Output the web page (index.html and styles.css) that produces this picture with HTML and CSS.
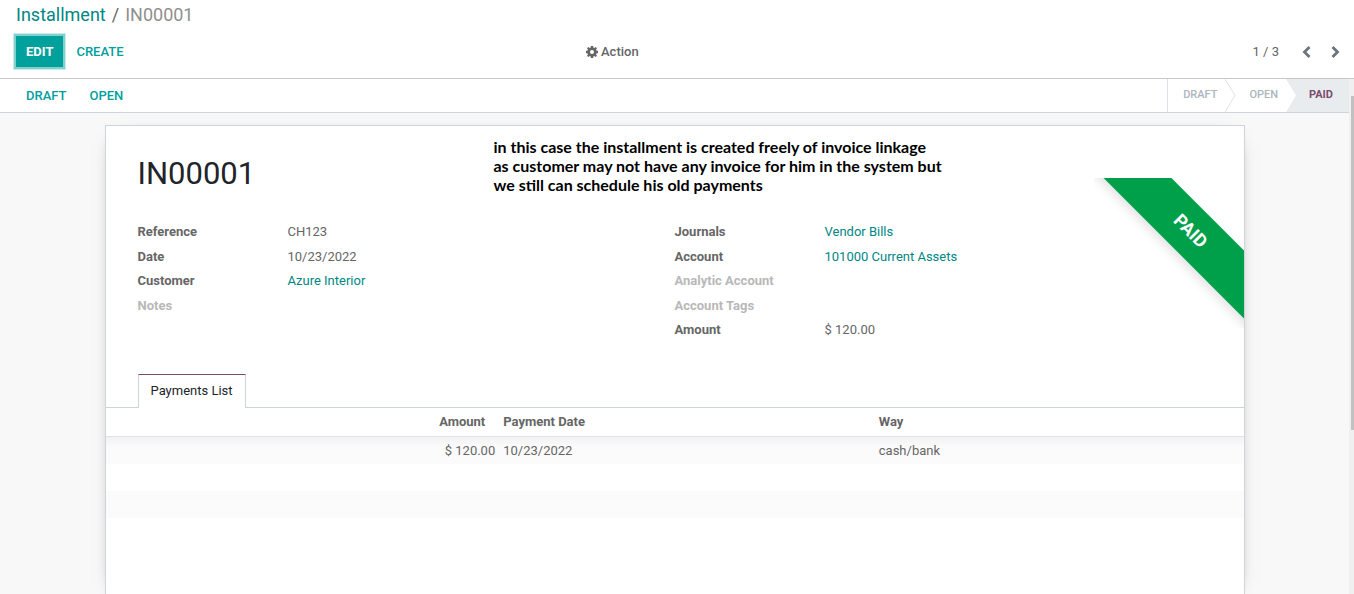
FILE: index.html
```html
<!DOCTYPE html>
<html lang="en">
<head>
<meta charset="utf-8">
<title>Installment / IN00001</title>
<link rel="stylesheet" href="styles.css">
</head>
<body>
<header class="control-panel">
  <nav class="breadcrumb" aria-label="Breadcrumb">
    <a href="#">Installment</a><span class="slash">/</span><span class="current">IN00001</span>
  </nav>
  <div class="toolbar">
    <div class="toolbar-left">
      <button class="btn btn-primary" type="button">EDIT</button>
      <button class="btn btn-link" type="button">CREATE</button>
    </div>
    <button class="action" type="button">
      <svg width="12" height="12" viewBox="0 0 12 12" aria-hidden="true"><path fill="currentColor" fill-rule="evenodd" d="M4.800 0h2.400l.3 1.700.8.300L9.700 1 11 2.300l-1 1.400.3.800 1.700.3v2.400l-1.700.3-.3.800 1 1.400L9.700 11l-1.400-1-.8.300L7.200 12H4.800l-.3-1.700-.8-.3-1.400 1L1 9.700l1-1.400-.3-.8L0 7.200V4.800l1.700-.3.300-.8-1-1.400L2.300 1l1.400 1 .8-.3zM6 4a2 2 0 1 0 0 4 2 2 0 0 0 0-4z"/></svg>
      Action
    </button>
    <div class="pager">
      <span class="pager-count">1 / 3</span>
      <button class="pager-btn" type="button" aria-label="Previous"><svg width="10" height="12" viewBox="0 0 10 12"><path d="M7.500 1 2.500 6l5 5" fill="none" stroke="currentColor" stroke-width="2.800"/></svg></button>
      <button class="pager-btn" type="button" aria-label="Next"><svg width="10" height="12" viewBox="0 0 10 12"><path d="m2.500 1 5 5-5 5" fill="none" stroke="currentColor" stroke-width="2.800"/></svg></button>
    </div>
  </div>
</header>
<div class="viewport">
  <main class="form-view">
    <div class="statusbar">
      <div class="status-actions">
        <button class="status-action" type="button">DRAFT</button>
        <button class="status-action" type="button">OPEN</button>
      </div>
      <div class="stages">
        <button class="stage" type="button">DRAFT</button>
        <svg class="chevron" width="11" height="33" viewBox="0 0 11 33" aria-hidden="true"><path d="M0 0 10 16.500 0 33" fill="none" stroke="#dee2e6"/></svg>
        <button class="stage" type="button">OPEN</button>
        <svg class="chevron chevron-active" width="11" height="33" viewBox="0 0 11 33" aria-hidden="true"><path d="M0 0 10 16.500 0 33z" fill="#fff"/></svg>
        <button class="stage stage-active" type="button" aria-current="step">PAID</button>
      </div>
    </div>
    <div class="sheet-area">
      <article class="sheet">
        <div class="ribbon"><span>PAID</span></div>
        <div class="sheet-head">
          <h1>IN00001</h1>
          <p class="note">in this case the installment is created freely of invoice linkage<br>as customer may not have any invoice for him in the system but<br>we still can schedule his old payments</p>
        </div>
        <div class="groups">
          <dl class="group">
            <dt>Reference</dt><dd>CH123</dd>
            <dt>Date</dt><dd>10/23/2022</dd>
            <dt>Customer</dt><dd><a href="#">Azure Interior</a></dd>
            <dt class="empty">Notes</dt><dd></dd>
          </dl>
          <dl class="group">
            <dt>Journals</dt><dd><a href="#">Vendor Bills</a></dd>
            <dt>Account</dt><dd><a href="#">101000 Current Assets</a></dd>
            <dt class="empty">Analytic Account</dt><dd></dd>
            <dt class="empty">Account Tags</dt><dd></dd>
            <dt>Amount</dt><dd>$ 120.00</dd>
          </dl>
        </div>
        <div class="tabs" role="tablist">
          <button class="tab" type="button" role="tab" aria-selected="true">Payments List</button>
        </div>
        <table class="payments">
          <thead>
            <tr><th class="amount">Amount</th><th class="date">Payment Date</th><th>Way</th></tr>
          </thead>
          <tbody>
            <tr><td class="amount">$ 120.00</td><td>10/23/2022</td><td>cash/bank</td></tr>
            <tr><td colspan="3"></td></tr>
            <tr><td colspan="3"></td></tr>
          </tbody>
        </table>
      </article>
    </div>
  </main>
  <div class="scrollbar" aria-hidden="true"><div class="thumb"></div></div>
</div>
</body>
</html>
```
FILE: styles.css
```css
* { box-sizing: border-box; }

body {
  margin: 0;
  height: 100vh;
  display: flex;
  flex-direction: column;
  overflow: hidden;
  background: #fff;
  color: #666;
  font-family: Roboto, "Liberation Sans", sans-serif;
  font-size: 13px;
  line-height: 1.5;
}

a { color: #008784; text-decoration: none; }

button {
  margin: 0;
  padding: 0;
  border: 0;
  background: none;
  color: inherit;
  font: inherit;
  cursor: pointer;
}

.control-panel {
  padding: 0 14px 9px;
  border-bottom: 1px solid #c8c8c8;
}

.breadcrumb {
  padding: 2px;
  font-size: 18px;
  line-height: 26px;
  color: #666;
}
.slash { padding: 0 6px; }
.current { color: #8f8f8f; }

.toolbar {
  display: grid;
  grid-template-columns: 572px 1fr auto;
  align-items: center;
  margin-top: 4px;
}
.toolbar-left { display: flex; }

.btn {
  height: 35px;
  padding: 0 12px;
  font-weight: 500;
}
.btn-primary {
  height: 31px;
  margin: 2px;
  padding: 0 10px;
  background: #00a09d;
  color: #fff;
  font-weight: 700;
  box-shadow: 0 0 0 2px #80d0ce, 0 0 0 3px #cceceb;
}
.btn-link { padding: 0 11px; color: #00a09d; }

.action {
  display: flex;
  align-items: center;
  gap: 3px;
  justify-self: start;
  color: #666;
  font-weight: 500;
}

.pager { display: flex; align-items: center; }
.pager-count { margin-right: 23px; }
.pager-btn { display: flex; color: #6c757d; }
.pager-btn + .pager-btn { margin-left: 18px; }

.viewport { flex: 1; display: flex; min-height: 0; }

.form-view {
  flex: 1;
  display: flex;
  flex-direction: column;
  min-width: 0;
  background: #f8f8f8;
}

.statusbar {
  display: flex;
  justify-content: space-between;
  height: 34px;
  background: #fff;
  border-bottom: 1px solid #ced4da;
}
.status-actions { display: flex; gap: 23px; padding-left: 26px; }
.status-action { color: #00a09d; font-weight: 500; }

.stages { display: flex; border-left: 1px solid #dee2e6; }
.stage {
  padding: 0 8px 1px 13px;
  color: #adb5bd;
  font-size: 11px;
  font-weight: 500;
}
.stage:first-child { padding-left: 15px; }
.stage-active {
  padding-right: 16px;
  padding-left: 12px;
  background: #e9ecef;
  color: #7c4b6b;
  font-weight: 700;
}
.chevron-active { background: #e9ecef; }

.sheet-area { flex: 1; display: flex; justify-content: center; padding-top: 12px; }

.sheet {
  position: relative;
  width: 100%;
  max-width: 1140px;
  background: #fff;
  border: 1px solid #ced4da;
  border-bottom: 0;
  box-shadow: 0 5px 20px -15px #000;
}

.ribbon {
  position: absolute;
  top: 52px;
  right: 0;
  width: 150px;
  height: 150px;
  overflow: hidden;
}
.ribbon span {
  position: absolute;
  top: 29px;
  left: -16px;
  width: 225px;
  line-height: 48px;
  transform: rotate(45deg);
  background: #00a04a;
  box-shadow: 0 5px 10px rgba(0, 0, 0, .1);
  color: #fff;
  font-size: 18px;
  font-weight: 700;
  text-align: center;
}

.sheet-head { display: flex; padding: 11px 32px 0; height: 96px; }
.sheet-head h1 {
  flex: 0 0 356px;
  margin: 18px 0 0;
  color: #212529;
  font-size: 31px;
  font-weight: 400;
  line-height: 38px;
}
.note {
  margin: 0;
  color: #000;
  font-family: Lato, "Open Sans", sans-serif;
  font-size: 16px;
  font-weight: 700;
  line-height: 19px;
}

.groups { display: grid; grid-template-columns: 1fr 1fr; padding: 0 32px; }
.group {
  display: grid;
  grid-template-columns: 150px 1fr;
  align-content: start;
  margin: 0;
}
.group dt, .group dd { margin: 0; padding: 0 0 5px; }
.group dt { font-weight: 700; }
.group .empty { color: #b8b8b8; }

.tabs {
  display: flex;
  margin-top: 29px;
  padding: 0 32px;
  border-bottom: 1px solid #ced4da;
}
.tab {
  height: 34px;
  margin-bottom: -1px;
  padding: 0 12px;
  background: #fff;
  border: 1px solid #ced4da;
  border-top-color: #7c4b6b;
  border-bottom: 0;
  color: #212529;
}

.payments { width: 100%; border-collapse: collapse; table-layout: fixed; }
.payments th, .payments td { padding: 0 4px; text-align: left; }
.payments th {
  height: 29px;
  border-bottom: 1px solid #dee2e6;
  font-weight: 700;
}
.payments td { height: 27px; }
.payments .date { width: 33%; }
.payments .amount { width: 34.6%; text-align: right; }
.payments th.amount { padding-right: 14px; }
.payments tbody tr:nth-child(odd) { background: #fbfbfb; }
.payments tbody tr:first-child { background: linear-gradient(#f2f2f2, #fbfbfb 10px); }

.scrollbar { width: 5px; padding: 17px 0 0 2px; background: #f0f0f0; }
.thumb { height: 67%; background: #c1c1c1; }
```
